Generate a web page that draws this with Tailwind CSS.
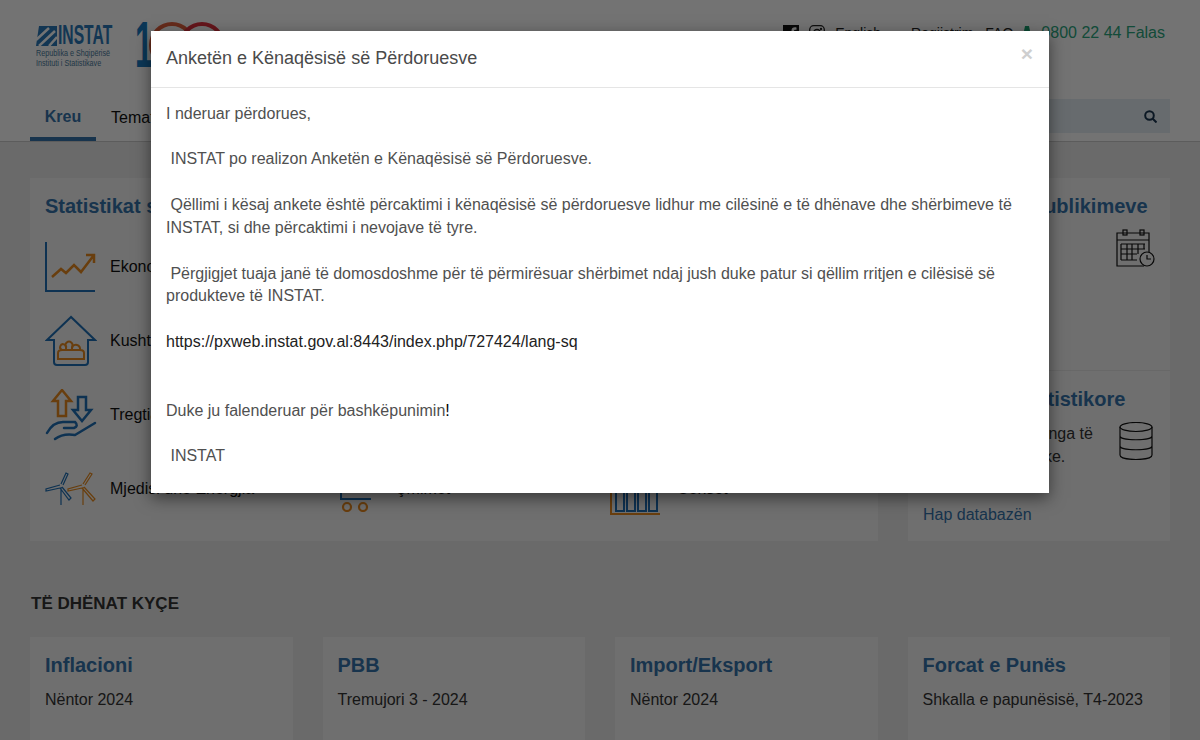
<!DOCTYPE html>
<html lang="en">
<head>
    <meta charset="UTF-8">
    <meta name="viewport" content="width=device-width, initial-scale=1.0">
    <title>INSTAT</title>
    <script src="https://cdn.jsdelivr.net/npm/@tailwindcss/browser@4"></script>
</head>
<body class="relative h-[740px] overflow-hidden bg-[#ececec] font-['Liberation_Sans',Arial,sans-serif] text-black">
    <!-- page under the modal -->
    <header class="h-[142px] border-b border-[#ccc] bg-white px-[30px]">
        <div class="flex h-[99px] justify-between">
            <div class="flex pl-[6px] pt-[25px]">
                <div class="w-[78px]">
                    <div class="flex h-[21px] items-center">
                        <svg width="21" height="20" viewBox="0 0 21 20" class="shrink-0"><path d="M3 0H21V20H0Z" fill="#2a78b8"/><path d="M0 14L13 2M3 20L19 5M13 20L21 11" stroke="#fff" stroke-width="2.500"/></svg>
                        <span class="ml-[1px] origin-left scale-x-[.58] text-[27px] leading-none font-bold text-[#2a78b8]">INSTAT</span>
                    </div>
                    <p class="mt-[2px] origin-top-left scale-x-[.8] whitespace-nowrap text-[9px] leading-[10px] text-[#4a7a9c]">Republika e Shqipërisë<br>Instituti i Statistikave</p>
                </div>
                <div class="ml-[21px] -mt-[3px] flex items-start">
                    <span class="-mt-[9px] w-[12px] origin-left scale-x-[.5] text-[64px] leading-none font-bold text-[#1a7ac0]">1</span>
                    <svg width="76" height="48" viewBox="0 0 76 48" fill="none" class="ml-[2px]"><circle cx="23" cy="23" r="21" stroke="#e2603d" stroke-width="4"/><circle cx="53" cy="23" r="21" stroke="#e0303d" stroke-width="4"/></svg>
                </div>
            </div>
            <div class="mr-[5px] flex h-[41px] items-center pt-[25px] text-[14px] text-[#222]">
                <svg width="16" height="16" viewBox="0 0 16 16"><path d="M0 0H16V16H11V10H13L13.400 7.500H11V6C11 5 11.500 4.700 12.500 4.700H13.500V2.500C11 2 8.500 2.500 8.500 5.500V7.500H6.500V10H8.500V16H0Z" fill="#111"/></svg>
                <svg width="16" height="16" viewBox="0 0 16 16" fill="none" stroke="#222" stroke-width="1.300" class="ml-[10px]"><rect x=".7" y=".7" width="14.600" height="14.600" rx="4"/><circle cx="8" cy="8" r="3.500"/><circle cx="12" cy="4" r=".5"/></svg>
                <span class="ml-[10px]">English</span>
                <span class="ml-[30px]">Regjistrim</span>
                <span class="ml-[12px]">FAQ</span>
                <svg width="8" height="16" viewBox="0 0 8 16" class="ml-[10px]"><path d="M2 1H6L7 6L6 15H2L1 6Z" fill="#18a070"/></svg>
                <span class="ml-[10px] text-[16px] text-[#2aa67e]">0800 22 44 Falas</span>
            </div>
        </div>
        <div class="flex items-stretch justify-between">
            <nav class="flex text-[16px]">
                <a class="flex h-[42px] w-[66px] items-start justify-center border-b-[4px] border-[#3574ac] pt-[6px] font-bold text-[#3574ac]">Kreu</a>
                <a class="ml-[15px] pt-[7px] text-[#111]">Temat</a>
            </nav>
            <div class="flex h-[34px] w-[300px] items-center justify-end bg-[#e4edf3] pr-[13px]">
                <svg width="13" height="13" viewBox="0 0 13 13" fill="none" stroke="#1a3550" stroke-width="2"><circle cx="5.500" cy="5.500" r="4.300"/><path d="M8.500 8.500L12.500 12.500"/></svg>
            </div>
        </div>
    </header>

    <main class="px-[30px] pt-[36px]">
        <div class="flex gap-[30px]">
            <section class="h-[363px] w-[848px] bg-[#f6f6f6] px-[15px] pt-[15px]">
                <h2 class="text-[20px] leading-[26px] font-bold text-[#3574ac]">Statistikat sipas temave</h2>
                <div class="mt-[11px] grid grid-cols-[293px_272px_1fr] auto-rows-[74px] text-[16px] text-[#111]">
                    <div class="flex h-full items-center"><svg width="52" height="52" viewBox="0 0 52 52" fill="none" class="mr-[13px]"><path d="M1 1V50H50" stroke="#1f6fb5" stroke-width="2"/><path d="M7 36L16 28L21 32L29 24L36 31L49 14M41 14H49V22" stroke="#e88b1f" stroke-width="2.500"/></svg>Ekonomi</div>
                    <div class="flex h-full items-center pl-[57px]">Popullsia</div>
                    <div class="flex h-full items-center pl-[67px]">Industria</div>
                    <div class="flex h-full items-center"><svg width="52" height="52" viewBox="0 0 52 52" fill="none" class="mr-[13px]"><path d="M26 2L2 25H9V47Q9 50 12 50H40Q43 50 43 47V25H50Z" stroke="#1f6fb5" stroke-width="2"/><path d="M13 44V38Q13 35 17 35H35Q39 35 39 38V44ZM21 35V32A3.500 3.500 0 1 1 27 32V35M17 35A3 3 0 1 1 21 33M35 35A3 3 0 1 0 27 33" stroke="#e88b1f" stroke-width="2"/></svg>Kushtet</div>
                    <div class="flex h-full items-center pl-[57px]">Arsimi</div>
                    <div class="flex h-full items-center pl-[67px]">Turizmi</div>
                    <div class="flex h-full items-center"><svg width="52" height="52" viewBox="0 0 52 52" fill="none" class="mr-[13px]"><path d="M17 1L8 12H13V27H21V12H26Z" stroke="#e88b1f" stroke-width="2.500"/><path d="M33 8V21H28L37 32L46 21H41V8Z" stroke="#1f6fb5" stroke-width="2.500"/><path d="M2 44Q8 33 18 33H30Q34 37 29 39H19M10 50Q18 44 30 46L50 34" stroke="#1f6fb5" stroke-width="2.500" stroke-linecap="round"/></svg>Tregtia</div>
                    <div class="flex h-full items-center pl-[57px]">Bujqësia</div>
                    <div class="flex h-full items-center pl-[67px]">Transporti</div>
                    <div class="flex h-full items-center"><svg width="52" height="34" viewBox="0 0 52 34" fill="none" class="mr-[13px]"><path d="M16 15V33M15 13L1 17L1 19L15 16M16 12L21 1L23 2L18 13M17 15L26 26L24 28L15 16" stroke="#1f6fb5" stroke-width="1.200"/><path d="M38 15V33M37 13L23 17L23 19L37 16M38 12L45 1L47 2L40 13M39 15L50 27L48 29L37 16" stroke="#e88b1f" stroke-width="1.200"/></svg>Mjedisi dhe Energjia</div>
                    <div class="flex h-full items-center"><svg width="34" height="46" viewBox="0 0 34 46" fill="none" class="mr-[23px]"><path d="M3 0V33H33" stroke="#1f6fb5" stroke-width="2"/><circle cx="9" cy="41" r="4" stroke="#e88b1f" stroke-width="2.200"/><circle cx="25" cy="41" r="4" stroke="#e88b1f" stroke-width="2.200"/></svg>Çmimet</div>
                    <div class="flex h-full items-center"><svg width="51" height="52" viewBox="0 0 51 52" fill="none" class="mr-[16px]"><path d="M1 0V51H50" stroke="#e88b1f" stroke-width="2"/><path d="M6 20V48H14V20M17 20V48H25V20M28 20V48H36V20M39 20V48H47V20" stroke="#1f6fb5" stroke-width="2"/></svg>Censet</div>
                </div>
            </section>
            <aside class="h-[363px] w-[262px] bg-[#f6f6f6]">
                <div class="relative h-[193px] border-b border-[#e6e6e6] px-[15px] pt-[15px]">
                    <h2 class="whitespace-nowrap text-[20px] leading-[26px] font-bold text-[#3574ac]">Kalendari i Publikimeve</h2>
                    <svg width="40" height="40" viewBox="0 0 40 40" fill="none" stroke="#111" stroke-width="1.200" class="absolute right-[14px] top-[51px]"><path d="M28 37H1V4H33V23M1 11H33"/><rect x="7" y="1" width="4" height="5"/><rect x="24" y="1" width="4" height="5"/><path d="M5 15H29M5 20H29M5 25H21M5 31H21M5 15V31M11 15V31M16 15V31M22 15V25M28 15V20"/><circle cx="31" cy="30" r="7"/><path d="M31 26V30H35"/></svg>
                </div>
                <div class="relative px-[15px] pt-[15px]">
                    <h2 class="whitespace-nowrap pr-[33px] text-right text-[20px] leading-[26px] font-bold text-[#3574ac]">Databaza Statistikore</h2>
                    <p class="mt-[10px] w-[170px] text-[16px] leading-[23px] text-[#333]">Të dhëna zyrtare nga të gjitha temat publike.</p>
                    <svg width="34" height="38" viewBox="0 0 34 38" fill="none" stroke="#111" stroke-width="1.200" class="absolute right-[17px] top-[51px]"><ellipse cx="17" cy="5" rx="16" ry="4.500"/><path d="M1 5V33C1 39 33 39 33 33V5M1 14C1 19 33 19 33 14M1 24C1 29 33 29 33 24"/></svg>
                    <a class="mt-[35px] block text-[16px] text-[#3574ac]">Hap databazën</a>
                </div>
            </aside>
        </div>

        <h3 class="ml-[1px] mt-[52px] text-[17px] leading-[22px] font-bold text-[#333]">TË DHËNAT KYÇE</h3>
        <div class="mt-[22px] grid grid-cols-4 gap-[30px]">
            <div class="h-[160px] bg-[#f6f6f6] px-[15px] pt-[15px]"><h4 class="text-[20px] leading-[26px] font-bold text-[#3574ac]">Inflacioni</h4><p class="mt-[10px] text-[16px] leading-[23px] text-[#333]">Nëntor 2024</p></div>
            <div class="h-[160px] bg-[#f6f6f6] px-[15px] pt-[15px]"><h4 class="text-[20px] leading-[26px] font-bold text-[#3574ac]">PBB</h4><p class="mt-[10px] text-[16px] leading-[23px] text-[#333]">Tremujori 3 - 2024</p></div>
            <div class="h-[160px] bg-[#f6f6f6] px-[15px] pt-[15px]"><h4 class="text-[20px] leading-[26px] font-bold text-[#3574ac]">Import/Eksport</h4><p class="mt-[10px] text-[16px] leading-[23px] text-[#333]">Nëntor 2024</p></div>
            <div class="h-[160px] bg-[#f6f6f6] px-[15px] pt-[15px]"><h4 class="text-[20px] leading-[26px] font-bold text-[#3574ac]">Forcat e Punës</h4><p class="mt-[10px] text-[16px] leading-[23px] text-[#333]">Shkalla e papunësisë, T4-2023</p></div>
        </div>
    </main>

    <!-- backdrop + modal -->
    <div class="absolute inset-0 bg-black/55"></div>
    <div class="absolute left-[151px] top-[31px] h-[462px] w-[898px] bg-white shadow-[0_5px_15px_rgba(0,0,0,0.5)]">
        <div class="flex h-[57px] items-start justify-between border-b border-[#e5e5e5] px-[15px] pt-[15px]">
            <h4 class="text-[18px] leading-[25px] text-[#4a4a4a]">Anketën e Kënaqësisë së Përdoruesve</h4>
            <span class="-mt-[3px] mr-[1px] text-[21px] leading-[21px] font-bold text-[#cfcfcf]">×</span>
        </div>
        <div class="px-[15px] pt-[14.800px] text-[16px] leading-[22.830px] text-[#505050]">
            I nderuar përdorues,<br><br>
            &nbsp;INSTAT po realizon Anketën e Kënaqësisë së Përdoruesve.<br><br>
            &nbsp;Qëllimi i kësaj ankete është përcaktimi i kënaqësisë së përdoruesve lidhur me cilësinë e të dhënave dhe shërbimeve të INSTAT, si dhe përcaktimi i nevojave të tyre.<br><br>
            &nbsp;Përgjigjet tuaja janë të domosdoshme për të përmirësuar shërbimet ndaj jush duke patur si qëllim rritjen e cilësisë së produkteve të INSTAT.<br><br>
            <span class="text-[#222]">https://pxweb.instat.gov.al:8443/index.php/727424/lang-sq</span><br><br><br>
            Duke ju falenderuar për bashkëpunimin<span class="text-black">!</span><br><br>
            &nbsp;INSTAT
        </div>
    </div>
</body>
</html>
